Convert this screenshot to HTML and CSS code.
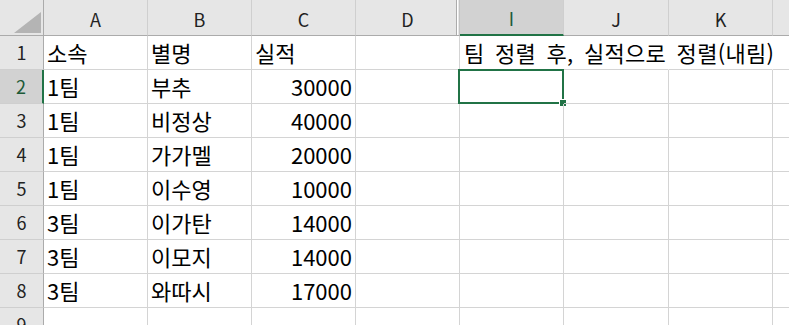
FILE: index.html
```html
<!DOCTYPE html>
<html lang="ko">
<head>
    <meta charset="UTF-8">
    <meta name="viewport" content="width=device-width, initial-scale=1.0">
    <title>정렬</title>
    <link rel="stylesheet" href="styles.css">
</head>
<body>
    <div class="sheet">
        <!-- column headers -->
        <div class="cell corner"></div>
        <div class="cell col-hd">A</div>
        <div class="cell col-hd">B</div>
        <div class="cell col-hd">C</div>
        <div class="cell col-hd hidden-after">D</div>
        <div class="cell col-hd selected">I</div>
        <div class="cell col-hd">J</div>
        <div class="cell col-hd">K</div>
        <div class="cell col-hd"></div>

        <!-- row 1 -->
        <div class="cell row-hd">1</div>
        <div class="cell">소속</div>
        <div class="cell">별명</div>
        <div class="cell">실적</div>
        <div class="cell"></div>
        <div class="cell spill title">팀 정렬 후, 실적으로 정렬(내림)</div>
        <div class="cell spill"></div>
        <div class="cell spill"></div>
        <div class="cell"></div>

        <!-- row 2 -->
        <div class="cell row-hd selected">2</div>
        <div class="cell">1팀</div>
        <div class="cell">부추</div>
        <div class="cell num">30000</div>
        <div class="cell"></div>
        <div class="cell active"><span class="handle"></span></div>
        <div class="cell"></div>
        <div class="cell"></div>
        <div class="cell"></div>

        <!-- row 3 -->
        <div class="cell row-hd">3</div>
        <div class="cell">1팀</div>
        <div class="cell">비정상</div>
        <div class="cell num">40000</div>
        <div class="cell"></div>
        <div class="cell"></div>
        <div class="cell"></div>
        <div class="cell"></div>
        <div class="cell"></div>

        <!-- row 4 -->
        <div class="cell row-hd">4</div>
        <div class="cell">1팀</div>
        <div class="cell">가가멜</div>
        <div class="cell num">20000</div>
        <div class="cell"></div>
        <div class="cell"></div>
        <div class="cell"></div>
        <div class="cell"></div>
        <div class="cell"></div>

        <!-- row 5 -->
        <div class="cell row-hd">5</div>
        <div class="cell">1팀</div>
        <div class="cell">이수영</div>
        <div class="cell num">10000</div>
        <div class="cell"></div>
        <div class="cell"></div>
        <div class="cell"></div>
        <div class="cell"></div>
        <div class="cell"></div>

        <!-- row 6 -->
        <div class="cell row-hd">6</div>
        <div class="cell">3팀</div>
        <div class="cell">이가탄</div>
        <div class="cell num">14000</div>
        <div class="cell"></div>
        <div class="cell"></div>
        <div class="cell"></div>
        <div class="cell"></div>
        <div class="cell"></div>

        <!-- row 7 -->
        <div class="cell row-hd">7</div>
        <div class="cell">3팀</div>
        <div class="cell">이모지</div>
        <div class="cell num">14000</div>
        <div class="cell"></div>
        <div class="cell"></div>
        <div class="cell"></div>
        <div class="cell"></div>
        <div class="cell"></div>

        <!-- row 8 -->
        <div class="cell row-hd">8</div>
        <div class="cell">3팀</div>
        <div class="cell">와따시</div>
        <div class="cell num">17000</div>
        <div class="cell"></div>
        <div class="cell"></div>
        <div class="cell"></div>
        <div class="cell"></div>
        <div class="cell"></div>

        <!-- row 9 -->
        <div class="cell row-hd">9</div>
        <div class="cell"></div>
        <div class="cell"></div>
        <div class="cell"></div>
        <div class="cell"></div>
        <div class="cell"></div>
        <div class="cell"></div>
        <div class="cell"></div>
        <div class="cell"></div>
    </div>
</body>
</html>
```

FILE: styles.css
```css
body {
    margin: 0;
    background-color: #fff;
    overflow: hidden;
    font-family: "Noto Sans CJK KR", "Noto Sans", sans-serif;
    color: #000;
}
.sheet {
    display: grid;
    grid-template-columns: 44px 104px 104px 104px 104px 104px 105px 104px 40px;
    grid-template-rows: 36px repeat(9, 34px);
}
.cell {
    position: relative;
    box-sizing: border-box;
    border-right: 1px solid #d4d4d4;
    border-bottom: 1px solid #d4d4d4;
    padding: 0 3px;
    font-size: 22px;
    line-height: 33px;
    white-space: nowrap;
}
.num {
    text-align: right;
    padding-right: 3px;
}
.col-hd,
.row-hd,
.corner {
    background-color: #e6e6e6;
    text-align: center;
    font-size: 18px;
    color: #222;
}
.col-hd {
    line-height: 38px;
    border-right-color: #cfcfcf;
    border-bottom-color: #ababab;
}
.row-hd {
    padding: 0;
    border-right-color: #ababab;
    border-bottom-color: #cfcfcf;
}
.corner {
    border-right-color: #ababab;
    border-bottom-color: #ababab;
}
.corner::after {
    content: "";
    position: absolute;
    left: 14px;
    top: 12px;
    width: 27px;
    height: 21px;
    background-color: #b4b4b4;
    clip-path: polygon(100% 0, 100% 100%, 0 100%);
}
/* hidden columns E:H show as a double line */
.hidden-after {
    border-right-color: #c4c4c4;
}
.hidden-after::after {
    content: "";
    position: absolute;
    right: 1px;
    top: 0;
    bottom: 0;
    width: 1px;
    background-color: #fff;
    box-shadow: -1px 0 0 #ababab;
}
.col-hd.selected {
    background-color: #d2d2d2;
    border-bottom: 2px solid #217346;
    line-height: 37px;
    color: #1d5a38;
}
.row-hd.selected {
    background-color: #d2d2d2;
    border-right: 2px solid #217346;
    color: #1d5a38;
}
.spill {
    border-right-color: transparent;
    overflow: visible;
}
.title {
    padding-left: 4px;
    word-spacing: 4px;
    letter-spacing: 0.3px;
}
.active::before {
    content: "";
    position: absolute;
    left: -2px;
    top: -1px;
    right: -1px;
    bottom: -1px;
    border: 2px solid #217346;
}
.handle {
    position: absolute;
    left: 100px;
    top: 30px;
    width: 6px;
    height: 6px;
    background-color: #217346;
    box-shadow: 0 0 0 1px #fff;
}
```
